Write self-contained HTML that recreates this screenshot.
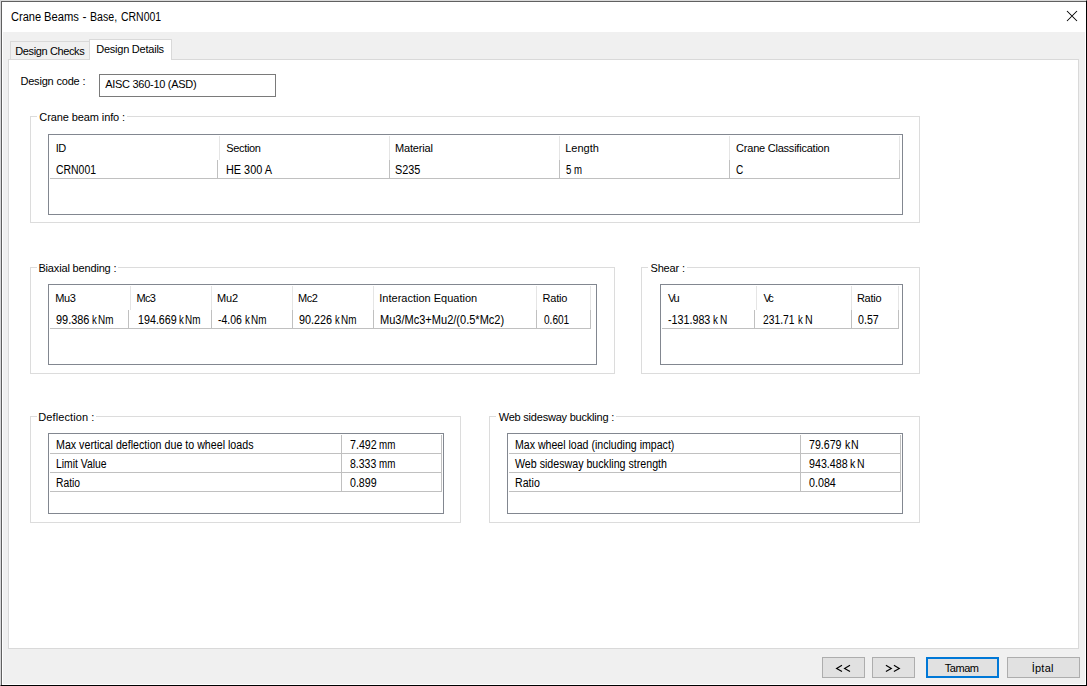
<!DOCTYPE html>
<html><head><meta charset="utf-8"><title>Crane Beams - Base, CRN001</title>
<style>
html,body{margin:0;padding:0;background:#fff;overflow:hidden}
#w{position:relative;width:1087px;height:686px;overflow:hidden;font-family:"Liberation Sans", sans-serif;}
#w i{position:absolute;display:block}
#w span{position:absolute;white-space:pre;line-height:14px;height:14px;color:#000;transform-origin:0 0}
#w span.r{-webkit-text-stroke:0.04px #000}
</style></head><body>
<div id="w">
<i style="left:0px;top:0px;width:1087px;height:686px;background:#ffffff"></i>
<i style="left:0px;top:0px;width:1087px;height:1px;background:#dadada"></i>
<i style="left:0px;top:0px;width:1px;height:686px;background:#d6d6d8"></i>
<i style="left:1px;top:1px;width:1086px;height:1px;background:#606060"></i>
<i style="left:1px;top:1px;width:1px;height:685px;background:#606060"></i>
<i style="left:1086px;top:0px;width:1px;height:686px;background:#000000"></i>
<i style="left:0px;top:685px;width:1087px;height:1px;background:#000000"></i>
<i style="left:0px;top:685px;width:1px;height:1px;background:#707070"></i>
<i style="left:1086px;top:0px;width:1px;height:1px;background:#707070"></i>
<i style="left:3px;top:32px;width:1082px;height:652px;background:#f0f0f0"></i>
<i style="left:8px;top:59px;width:1071px;height:590px;background:#ffffff"></i>
<i style="left:8px;top:59px;width:1071px;height:1px;background:#d9d9d9"></i>
<i style="left:8px;top:648px;width:1071px;height:1px;background:#d9d9d9"></i>
<i style="left:8px;top:59px;width:1px;height:590px;background:#d9d9d9"></i>
<i style="left:1078px;top:59px;width:1px;height:590px;background:#d9d9d9"></i>
<i style="left:10px;top:41px;width:80px;height:18px;background:#f0f0f0"></i>
<i style="left:10px;top:41px;width:80px;height:1px;background:#d9d9d9"></i>
<i style="left:10px;top:41px;width:1px;height:18px;background:#d9d9d9"></i>
<i style="left:89px;top:39px;width:83px;height:21px;background:#ffffff"></i>
<i style="left:89px;top:39px;width:83px;height:1px;background:#d9d9d9"></i>
<i style="left:89px;top:39px;width:1px;height:21px;background:#d9d9d9"></i>
<i style="left:171px;top:39px;width:1px;height:21px;background:#d9d9d9"></i>
<i style="left:99px;top:74px;width:177px;height:23px;background:#ffffff"></i>
<i style="left:99px;top:74px;width:177px;height:1px;background:#7a7a7a"></i>
<i style="left:99px;top:96px;width:177px;height:1px;background:#7a7a7a"></i>
<i style="left:99px;top:74px;width:1px;height:23px;background:#7a7a7a"></i>
<i style="left:275px;top:74px;width:1px;height:23px;background:#7a7a7a"></i>
<i style="left:30px;top:116px;width:890px;height:1px;background:#dcdcdc"></i>
<i style="left:30px;top:222px;width:890px;height:1px;background:#dcdcdc"></i>
<i style="left:30px;top:116px;width:1px;height:107px;background:#dcdcdc"></i>
<i style="left:919px;top:116px;width:1px;height:107px;background:#dcdcdc"></i>
<i style="left:48px;top:134px;width:855px;height:81px;background:#ffffff"></i>
<i style="left:48px;top:134px;width:855px;height:1px;background:#828790"></i>
<i style="left:48px;top:214px;width:855px;height:1px;background:#828790"></i>
<i style="left:48px;top:134px;width:1px;height:81px;background:#828790"></i>
<i style="left:902px;top:134px;width:1px;height:81px;background:#828790"></i>
<i style="left:219px;top:136px;width:1px;height:24px;background:#e5e5e5"></i>
<i style="left:217px;top:160px;width:1px;height:19px;background:#c0c0c0"></i>
<i style="left:389px;top:136px;width:1px;height:24px;background:#e5e5e5"></i>
<i style="left:389px;top:160px;width:1px;height:19px;background:#c0c0c0"></i>
<i style="left:559px;top:136px;width:1px;height:24px;background:#e5e5e5"></i>
<i style="left:559px;top:160px;width:1px;height:19px;background:#c0c0c0"></i>
<i style="left:729px;top:136px;width:1px;height:24px;background:#e5e5e5"></i>
<i style="left:729px;top:160px;width:1px;height:19px;background:#c0c0c0"></i>
<i style="left:899px;top:136px;width:1px;height:24px;background:#e5e5e5"></i>
<i style="left:899px;top:160px;width:1px;height:19px;background:#c0c0c0"></i>
<i style="left:50px;top:178px;width:850px;height:1px;background:#c0c0c0"></i>
<i style="left:30px;top:267px;width:585px;height:1px;background:#dcdcdc"></i>
<i style="left:30px;top:373px;width:585px;height:1px;background:#dcdcdc"></i>
<i style="left:30px;top:267px;width:1px;height:107px;background:#dcdcdc"></i>
<i style="left:614px;top:267px;width:1px;height:107px;background:#dcdcdc"></i>
<i style="left:48px;top:284px;width:549px;height:81px;background:#ffffff"></i>
<i style="left:48px;top:284px;width:549px;height:1px;background:#828790"></i>
<i style="left:48px;top:364px;width:549px;height:1px;background:#828790"></i>
<i style="left:48px;top:284px;width:1px;height:81px;background:#828790"></i>
<i style="left:596px;top:284px;width:1px;height:81px;background:#828790"></i>
<i style="left:130px;top:286px;width:1px;height:24px;background:#e5e5e5"></i>
<i style="left:128px;top:310px;width:1px;height:19px;background:#c0c0c0"></i>
<i style="left:211px;top:286px;width:1px;height:24px;background:#e5e5e5"></i>
<i style="left:211px;top:310px;width:1px;height:19px;background:#c0c0c0"></i>
<i style="left:292px;top:286px;width:1px;height:24px;background:#e5e5e5"></i>
<i style="left:292px;top:310px;width:1px;height:19px;background:#c0c0c0"></i>
<i style="left:373px;top:286px;width:1px;height:24px;background:#e5e5e5"></i>
<i style="left:373px;top:310px;width:1px;height:19px;background:#c0c0c0"></i>
<i style="left:536px;top:286px;width:1px;height:24px;background:#e5e5e5"></i>
<i style="left:536px;top:310px;width:1px;height:19px;background:#c0c0c0"></i>
<i style="left:590px;top:286px;width:1px;height:24px;background:#e5e5e5"></i>
<i style="left:590px;top:310px;width:1px;height:19px;background:#c0c0c0"></i>
<i style="left:50px;top:328px;width:541px;height:1px;background:#c0c0c0"></i>
<i style="left:641px;top:267px;width:279px;height:1px;background:#dcdcdc"></i>
<i style="left:641px;top:373px;width:279px;height:1px;background:#dcdcdc"></i>
<i style="left:641px;top:267px;width:1px;height:107px;background:#dcdcdc"></i>
<i style="left:919px;top:267px;width:1px;height:107px;background:#dcdcdc"></i>
<i style="left:660px;top:284px;width:243px;height:81px;background:#ffffff"></i>
<i style="left:660px;top:284px;width:243px;height:1px;background:#828790"></i>
<i style="left:660px;top:364px;width:243px;height:1px;background:#828790"></i>
<i style="left:660px;top:284px;width:1px;height:81px;background:#828790"></i>
<i style="left:902px;top:284px;width:1px;height:81px;background:#828790"></i>
<i style="left:756px;top:286px;width:1px;height:24px;background:#e5e5e5"></i>
<i style="left:754px;top:310px;width:1px;height:19px;background:#c0c0c0"></i>
<i style="left:851px;top:286px;width:1px;height:24px;background:#e5e5e5"></i>
<i style="left:851px;top:310px;width:1px;height:19px;background:#c0c0c0"></i>
<i style="left:898px;top:286px;width:1px;height:24px;background:#e5e5e5"></i>
<i style="left:898px;top:310px;width:1px;height:19px;background:#c0c0c0"></i>
<i style="left:662px;top:328px;width:237px;height:1px;background:#c0c0c0"></i>
<i style="left:30px;top:416px;width:431px;height:1px;background:#dcdcdc"></i>
<i style="left:30px;top:522px;width:431px;height:1px;background:#dcdcdc"></i>
<i style="left:30px;top:416px;width:1px;height:107px;background:#dcdcdc"></i>
<i style="left:460px;top:416px;width:1px;height:107px;background:#dcdcdc"></i>
<i style="left:48px;top:433px;width:396px;height:81px;background:#ffffff"></i>
<i style="left:48px;top:433px;width:396px;height:1px;background:#828790"></i>
<i style="left:48px;top:513px;width:396px;height:1px;background:#828790"></i>
<i style="left:48px;top:433px;width:1px;height:81px;background:#828790"></i>
<i style="left:443px;top:433px;width:1px;height:81px;background:#828790"></i>
<i style="left:50px;top:453px;width:392px;height:1px;background:#c0c0c0"></i>
<i style="left:50px;top:472px;width:392px;height:1px;background:#c0c0c0"></i>
<i style="left:50px;top:491px;width:392px;height:1px;background:#c0c0c0"></i>
<i style="left:341px;top:435px;width:1px;height:57px;background:#c0c0c0"></i>
<i style="left:441px;top:435px;width:1px;height:57px;background:#c0c0c0"></i>
<i style="left:489px;top:416px;width:431px;height:1px;background:#dcdcdc"></i>
<i style="left:489px;top:522px;width:431px;height:1px;background:#dcdcdc"></i>
<i style="left:489px;top:416px;width:1px;height:107px;background:#dcdcdc"></i>
<i style="left:919px;top:416px;width:1px;height:107px;background:#dcdcdc"></i>
<i style="left:507px;top:433px;width:396px;height:81px;background:#ffffff"></i>
<i style="left:507px;top:433px;width:396px;height:1px;background:#828790"></i>
<i style="left:507px;top:513px;width:396px;height:1px;background:#828790"></i>
<i style="left:507px;top:433px;width:1px;height:81px;background:#828790"></i>
<i style="left:902px;top:433px;width:1px;height:81px;background:#828790"></i>
<i style="left:509px;top:453px;width:392px;height:1px;background:#c0c0c0"></i>
<i style="left:509px;top:472px;width:392px;height:1px;background:#c0c0c0"></i>
<i style="left:509px;top:491px;width:392px;height:1px;background:#c0c0c0"></i>
<i style="left:800px;top:435px;width:1px;height:57px;background:#c0c0c0"></i>
<i style="left:900px;top:435px;width:1px;height:57px;background:#c0c0c0"></i>
<i style="left:822px;top:657px;width:43px;height:21px;background:#e1e1e1"></i>
<i style="left:822px;top:657px;width:43px;height:1px;background:#adadad"></i>
<i style="left:822px;top:677px;width:43px;height:1px;background:#adadad"></i>
<i style="left:822px;top:657px;width:1px;height:21px;background:#adadad"></i>
<i style="left:864px;top:657px;width:1px;height:21px;background:#adadad"></i>
<i style="left:872px;top:657px;width:43px;height:21px;background:#e1e1e1"></i>
<i style="left:872px;top:657px;width:43px;height:1px;background:#adadad"></i>
<i style="left:872px;top:677px;width:43px;height:1px;background:#adadad"></i>
<i style="left:872px;top:657px;width:1px;height:21px;background:#adadad"></i>
<i style="left:914px;top:657px;width:1px;height:21px;background:#adadad"></i>
<i style="left:926px;top:657px;width:73px;height:21px;background:#e1e1e1"></i>
<i style="left:926px;top:657px;width:73px;height:1px;background:#0078d7"></i>
<i style="left:926px;top:677px;width:73px;height:1px;background:#0078d7"></i>
<i style="left:926px;top:657px;width:1px;height:21px;background:#0078d7"></i>
<i style="left:998px;top:657px;width:1px;height:21px;background:#0078d7"></i>
<i style="left:927px;top:658px;width:71px;height:1px;background:#0078d7"></i>
<i style="left:927px;top:676px;width:71px;height:1px;background:#0078d7"></i>
<i style="left:927px;top:658px;width:1px;height:19px;background:#0078d7"></i>
<i style="left:997px;top:658px;width:1px;height:19px;background:#0078d7"></i>
<i style="left:1007px;top:657px;width:73px;height:21px;background:#e1e1e1"></i>
<i style="left:1007px;top:657px;width:73px;height:1px;background:#adadad"></i>
<i style="left:1007px;top:677px;width:73px;height:1px;background:#adadad"></i>
<i style="left:1007px;top:657px;width:1px;height:21px;background:#adadad"></i>
<i style="left:1079px;top:657px;width:1px;height:21px;background:#adadad"></i>
<svg style="position:absolute;left:1066px;top:10px" width="12" height="12" viewBox="0 0 12 12"><path d="M1 1 L11 11 M11 1 L1 11" stroke="#000" stroke-width="1.05" fill="none"/></svg>
<svg style="position:absolute;left:830px;top:660px" width="80" height="16" viewBox="830 660 80 16"><g stroke="#000" stroke-width="1.15" fill="none" stroke-linejoin="miter"><path d="M842.0 665.3 L836.6 668.4 L842.0 671.5"/><path d="M850.0 665.3 L844.6 668.4 L850.0 671.5"/><path d="M885.9 665.3 L891.3 668.4 L885.9 671.5"/><path d="M893.9 665.3 L899.3 668.4 L893.9 671.5"/></g></svg>
<span style="left:10.80px;top:9.6px;font-size:12px;transform:scaleX(0.9212)">Crane</span>
<span style="left:43.97px;top:9.6px;font-size:12px;transform:scaleX(0.9333)">Beams</span>
<span style="left:82.50px;top:9.6px;font-size:12px;transform:scaleX(1.0000)">-</span>
<span style="left:90.12px;top:9.6px;font-size:12px;transform:scaleX(0.8828)">Base,</span>
<span style="left:120.80px;top:9.6px;font-size:12px;transform:scaleX(0.8717)">CRN001</span>
<span style="left:15.30px;top:44.0px;font-size:11px;letter-spacing:-0.383px">Design Checks</span>
<span style="left:96.20px;top:42.0px;font-size:11px;letter-spacing:-0.231px">Design Details</span>
<span style="left:20.40px;top:74.0px;font-size:11px;letter-spacing:-0.183px">Design code :</span>
<span style="left:105.20px;top:77.0px;font-size:11px;letter-spacing:-0.281px">AISC 360-10 (ASD)</span>
<i style="left:37px;top:116px;width:90px;height:1px;background:#fff"></i>
<span style="left:39.30px;top:110.0px;font-size:11px;letter-spacing:-0.100px">Crane beam info :</span>
<span style="left:55.70px;top:141.0px;font-size:11px;letter-spacing:-0.400px">ID</span>
<span style="left:226.30px;top:141.0px;font-size:11px;letter-spacing:-0.333px">Section</span>
<span style="left:395.00px;top:141.0px;font-size:11px;letter-spacing:-0.171px">Material</span>
<span style="left:565.20px;top:141.0px;font-size:11px;letter-spacing:0.000px">Length</span>
<span style="left:736.10px;top:141.0px;font-size:11px;letter-spacing:-0.226px">Crane Classification</span>
<span class="r" style="left:55.50px;top:163.0px;font-size:12px;transform:scaleX(0.8696)">CRN001</span>
<span class="r" style="left:225.59px;top:163.0px;font-size:12px;transform:scaleX(0.9060)">HE 300 A</span>
<span class="r" style="left:395.10px;top:163.0px;font-size:12px;transform:scaleX(0.9037)">S235</span>
<span class="r" style="left:566.20px;top:163.0px;font-size:12px;transform:scaleX(0.8000)">5 m</span>
<span class="r" style="left:736.40px;top:163.0px;font-size:12px;transform:scaleX(0.8375)">C</span>
<i style="left:37px;top:267px;width:81px;height:1px;background:#fff"></i>
<span style="left:38.40px;top:261.0px;font-size:11px;letter-spacing:-0.162px">Biaxial bending :</span>
<span style="left:55.20px;top:291.0px;font-size:11px;letter-spacing:-0.350px">Mu3</span>
<span style="left:136.40px;top:291.0px;font-size:11px;letter-spacing:-0.600px">Mc3</span>
<span style="left:217.00px;top:291.0px;font-size:11px;letter-spacing:-0.100px">Mu2</span>
<span style="left:298.10px;top:291.0px;font-size:11px;letter-spacing:-0.450px">Mc2</span>
<span style="left:379.30px;top:291.0px;font-size:11px;letter-spacing:0.000px">Interaction Equation</span>
<span style="left:542.50px;top:291.0px;font-size:11px;letter-spacing:-0.200px">Ratio</span>
<span class="r" style="left:56.20px;top:313.0px;font-size:12px;transform:scaleX(0.9111)">99.386</span>
<span class="r" style="left:92.30px;top:313.0px;font-size:12px;transform:scaleX(0.8000)">k</span>
<span class="r" style="left:98.48px;top:313.0px;font-size:12px;transform:scaleX(0.8235)">Nm</span>
<span class="r" style="left:137.51px;top:313.0px;font-size:12px;transform:scaleX(0.8929)">194.669</span>
<span class="r" style="left:178.90px;top:313.0px;font-size:12px;transform:scaleX(0.8000)">k</span>
<span class="r" style="left:185.38px;top:313.0px;font-size:12px;transform:scaleX(0.8235)">Nm</span>
<span class="r" style="left:218.10px;top:313.0px;font-size:12px;transform:scaleX(0.8741)">-4.06</span>
<span class="r" style="left:244.90px;top:313.0px;font-size:12px;transform:scaleX(0.8167)">k</span>
<span class="r" style="left:251.48px;top:313.0px;font-size:12px;transform:scaleX(0.8235)">Nm</span>
<span class="r" style="left:299.10px;top:313.0px;font-size:12px;transform:scaleX(0.9000)">90.226</span>
<span class="r" style="left:334.90px;top:313.0px;font-size:12px;transform:scaleX(0.7833)">k</span>
<span class="r" style="left:341.28px;top:313.0px;font-size:12px;transform:scaleX(0.8235)">Nm</span>
<span class="r" style="left:379.78px;top:313.0px;font-size:12px;transform:scaleX(0.9194)">Mu3/Mc3+Mu2/(0.5*Mc2)</span>
<span class="r" style="left:543.60px;top:313.0px;font-size:12px;transform:scaleX(0.8400)">0.601</span>
<i style="left:648px;top:267px;width:39px;height:1px;background:#fff"></i>
<span style="left:650.50px;top:261.0px;font-size:11px;letter-spacing:-0.167px">Shear :</span>
<span style="left:668.10px;top:291.0px;font-size:11px;letter-spacing:-1.500px">Vu</span>
<span style="left:763.60px;top:291.0px;font-size:11px;letter-spacing:-2.700px">Vc</span>
<span style="left:856.90px;top:291.0px;font-size:11px;letter-spacing:-0.225px">Ratio</span>
<span class="r" style="left:668.10px;top:313.0px;font-size:12px;transform:scaleX(0.8936)">-131.983</span>
<span class="r" style="left:713.30px;top:313.0px;font-size:12px;transform:scaleX(0.8167)">k</span>
<span class="r" style="left:719.56px;top:313.0px;font-size:12px;transform:scaleX(0.8429)">N</span>
<span class="r" style="left:763.10px;top:313.0px;font-size:12px;transform:scaleX(0.8568)">231.71</span>
<span class="r" style="left:798.40px;top:313.0px;font-size:12px;transform:scaleX(0.8000)">k</span>
<span class="r" style="left:804.61px;top:313.0px;font-size:12px;transform:scaleX(0.8857)">N</span>
<span class="r" style="left:858.10px;top:313.0px;font-size:12px;transform:scaleX(0.8870)">0.57</span>
<i style="left:37px;top:416px;width:59px;height:1px;background:#fff"></i>
<span style="left:38.30px;top:410.0px;font-size:11px;letter-spacing:0.100px">Deflection :</span>
<span class="r" style="left:56.31px;top:438.0px;font-size:12px;transform:scaleX(0.8891)">Max vertical deflection due to wheel loads</span>
<span class="r" style="left:350.00px;top:438.0px;font-size:12px;transform:scaleX(0.8900)">7.492</span>
<span class="r" style="left:56.34px;top:457.0px;font-size:12px;transform:scaleX(0.8632)">Limit Value</span>
<span class="r" style="left:350.00px;top:457.0px;font-size:12px;transform:scaleX(0.8767)">8.333</span>
<span class="r" style="left:56.34px;top:476.0px;font-size:12px;transform:scaleX(0.8593)">Ratio</span>
<span class="r" style="left:350.00px;top:476.0px;font-size:12px;transform:scaleX(0.8867)">0.899</span>
<span class="r" style="left:378.78px;top:438.0px;font-size:12px;transform:scaleX(0.8158)">mm</span>
<span class="r" style="left:378.78px;top:457.0px;font-size:12px;transform:scaleX(0.8158)">mm</span>
<i style="left:496px;top:416px;width:120px;height:1px;background:#fff"></i>
<span style="left:498.70px;top:410.0px;font-size:11px;letter-spacing:-0.214px">Web sidesway buckling :</span>
<span class="r" style="left:514.52px;top:438.0px;font-size:12px;transform:scaleX(0.8816)">Max wheel load (including impact)</span>
<span class="r" style="left:809.40px;top:438.0px;font-size:12px;transform:scaleX(0.8833)">79.679</span>
<span class="r" style="left:515.40px;top:457.0px;font-size:12px;transform:scaleX(0.8877)">Web sidesway buckling strength</span>
<span class="r" style="left:809.00px;top:457.0px;font-size:12px;transform:scaleX(0.8907)">943.488</span>
<span class="r" style="left:514.51px;top:476.0px;font-size:12px;transform:scaleX(0.8852)">Ratio</span>
<span class="r" style="left:809.10px;top:476.0px;font-size:12px;transform:scaleX(0.8933)">0.084</span>
<span class="r" style="left:844.50px;top:438.0px;font-size:12px;transform:scaleX(0.8833)">k</span>
<span class="r" style="left:851.31px;top:438.0px;font-size:12px;transform:scaleX(0.8857)">N</span>
<span class="r" style="left:849.90px;top:457.0px;font-size:12px;transform:scaleX(0.8833)">k</span>
<span class="r" style="left:856.83px;top:457.0px;font-size:12px;transform:scaleX(0.8714)">N</span>
<span style="left:944.80px;top:661.0px;font-size:11px;letter-spacing:-0.475px">Tamam</span>
<span style="left:1031.70px;top:661.0px;font-size:11px;letter-spacing:0.250px">İptal</span>
</div>
</body></html>
